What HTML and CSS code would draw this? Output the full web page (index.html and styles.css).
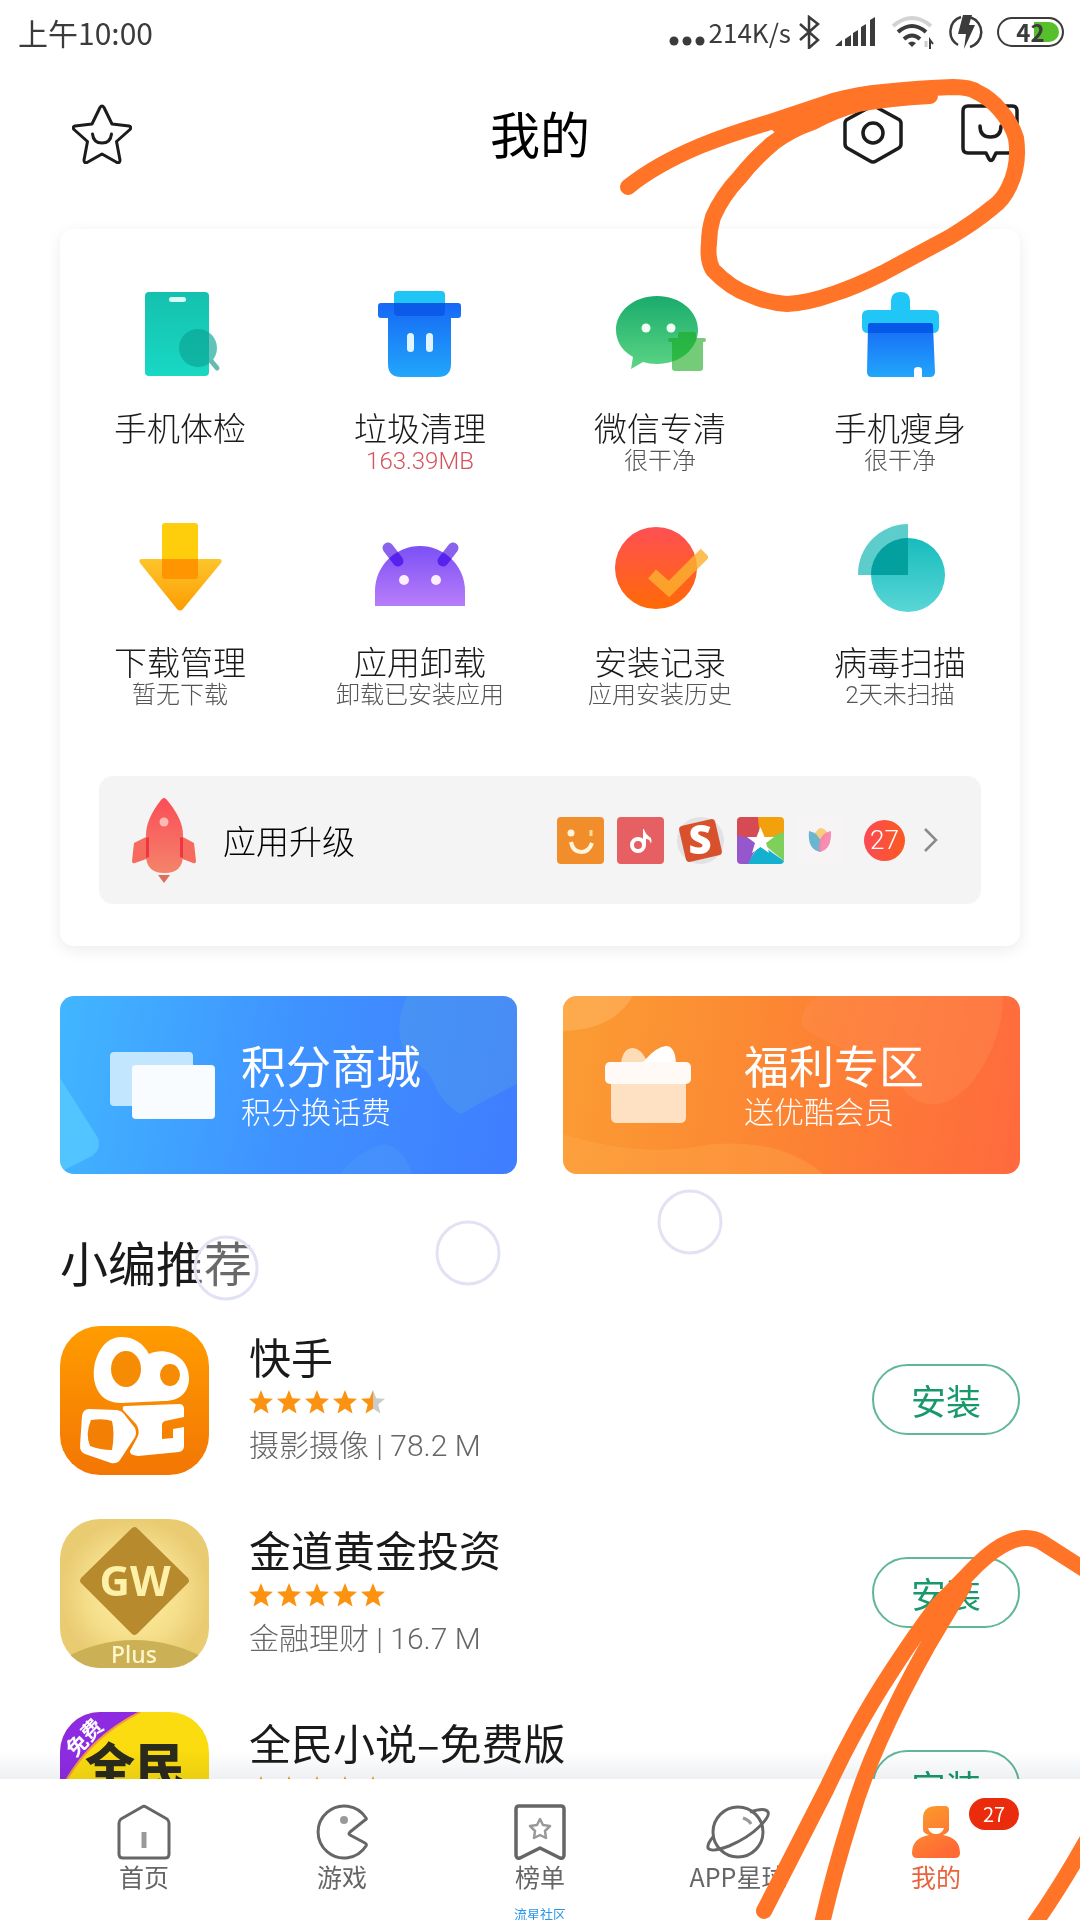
FILE: index.html
```html
<!DOCTYPE html>
<html lang="zh-CN">
<head>
  <meta charset="UTF-8">
  <meta name="viewport" content="width=device-width, initial-scale=1">
  <title>我的</title>
  <link rel="stylesheet" href="styles.css">
</head>
<body>

<!-- shared shapes -->
<svg class="defs" width="0" height="0">
  <defs>
    <symbol id="star" viewBox="0 0 22 22">
      <path d="M11 0l3 7.600 8 .5-6.200 5.200 2.100 8.200L11 17.200 4.100 21.500l2.100-8.200L0 8.100l8-.5z"/>
    </symbol>
    <linearGradient id="g-teal" x1="0" y1="0" x2="0" y2="1"><stop offset="0" stop-color="#14c1ae"/><stop offset="1" stop-color="#18d8c4"/></linearGradient>
    <linearGradient id="g-blue" x1="0" y1="0" x2="0" y2="1"><stop offset="0" stop-color="#1668f5"/><stop offset="1" stop-color="#22a6fb"/></linearGradient>
    <linearGradient id="g-green" x1="0" y1="0" x2="0" y2="1"><stop offset="0" stop-color="#1aab6c"/><stop offset="1" stop-color="#5bd584"/></linearGradient>
    <linearGradient id="g-yellow" x1="0" y1="0" x2="0" y2="1"><stop offset="0" stop-color="#fdc52c"/><stop offset="1" stop-color="#fd9d02"/></linearGradient>
    <linearGradient id="g-purple" x1="0" y1="0" x2="0" y2="1"><stop offset="0" stop-color="#7c50f6"/><stop offset="1" stop-color="#b87df9"/></linearGradient>
    <linearGradient id="g-red" x1="0" y1="0" x2="0" y2="1"><stop offset="0" stop-color="#ff4f55"/><stop offset="1" stop-color="#ff6a06"/></linearGradient>
    <linearGradient id="g-cyan" x1="0" y1="0" x2="0" y2="1"><stop offset="0" stop-color="#17bcbd"/><stop offset="1" stop-color="#5ad6d6"/></linearGradient>
    <linearGradient id="g-rocket" x1="0" y1="0" x2="0" y2="1"><stop offset="0" stop-color="#fb4d58"/><stop offset="1" stop-color="#f4846a"/></linearGradient>
    <linearGradient id="g-me" x1="0" y1="0" x2="0.500" y2="1"><stop offset="0" stop-color="#fb9f2a"/><stop offset="1" stop-color="#ff6a35"/></linearGradient>
    <linearGradient id="g-ks" x1="0" y1="0" x2="0" y2="1"><stop offset="0" stop-color="#ff9c00"/><stop offset="1" stop-color="#f37603"/></linearGradient>
    <radialGradient id="g-gold"><stop offset="0" stop-color="#fdf0a4"/><stop offset="0.600" stop-color="#f6df8c"/><stop offset="1" stop-color="#e9cb72"/></radialGradient>
    <linearGradient id="g-half"><stop offset="0.500" stop-color="#fb9210"/><stop offset="0.500" stop-color="#ccc"/></linearGradient>
    <clipPath id="dome"><path d="M3 86V71a45 45 0 0 1 90 0v15z"/></clipPath>
  </defs>
</svg>

<div class="app">

  <div class="status">
    <span class="clock">上午10:00</span>
    <div class="status-right">
      <svg width="36" height="10" fill="#3b3b3b"><circle cx="5" cy="5" r="4.500"/><circle cx="18" cy="5" r="4.500"/><circle cx="31" cy="5" r="4.500"/></svg>
      <span class="speed">214K/s</span>
      <svg width="22" height="34" viewBox="0 0 22 34" fill="none" stroke="#3b3b3b" stroke-width="2.500"><path d="M1 9l18 16-9 8V2l9 7L1 25"/></svg>
      <svg class="signal" width="42" height="30" viewBox="0 0 42 30" fill="#3b3b3b"><path d="M0 29l7-6v6zM10 22l6-4v11h-6zM18 16l5-3v16h-5zM26 10l5-3v22h-5zM35 3l5-3v29h-5z"/></svg>
      <svg width="44" height="34" viewBox="0 0 44 34" fill="none" stroke="#3b3b3b" stroke-width="4"><path d="M2 11Q21-5 40 11" stroke="#d3d3d3"/><path d="M7 17q14-12 28 0M13 24q8-7 16 0"/><path d="M21 32l-4-4q4-3 8 0z" fill="#3b3b3b" stroke="none"/><path d="M39 34V25l3 4" stroke-width="2"/><path d="M35 26v6" stroke="#ccc" stroke-width="3"/></svg>
      <svg width="34" height="34" viewBox="0 0 34 34"><path d="M12 2A15.500 15.500 0 0 0 9 30M22 2.500A15.500 15.500 0 0 1 21 32" fill="none" stroke="#3b3b3b" stroke-width="2.500"/><path d="M14 0h9l-3 10h6L15 34l2-15h-8z" fill="#3b3b3b"/></svg>
      <span class="battery">42</span>
    </div>
  </div>

  <header class="header">
    <button class="icon-btn" aria-label="收藏">
      <svg width="60" height="60" viewBox="0 0 60 60" fill="none" stroke="#1c1c1c" stroke-width="3" stroke-linejoin="round" stroke-linecap="round"><path d="M28 3.500q2-3 4 0l8 16.500 17 2q3 1 1 3.500L44.500 37.500 48 56q0 3.500-3 2.500L30 50l-15 8.500q-3 1-3-2.500l3.500-18.500L2 25.500q-2-2.500 1-3.500l17-2z"/><path d="M20.500 30q1 9 9.500 9t9.500-9"/></svg>
    </button>
    <h1>我的</h1>
    <div class="header-right">
      <button class="icon-btn" aria-label="设置">
        <svg width="60" height="60" viewBox="0 0 60 60" fill="none" stroke="#1c1c1c" stroke-width="3.500" stroke-linejoin="round"><path d="M27 3q3-1.500 6 0l22 12q3 1.500 3 4v21q0 3-3 4.500L33 57q-3 2-6 0L5 44.500Q2 43 2 40V19q0-2.500 3-4z"/><circle cx="30" cy="29" r="10"/></svg>
      </button>
      <button class="icon-btn" aria-label="消息">
        <svg width="60" height="60" viewBox="0 0 60 60" fill="none" stroke="#1c1c1c" stroke-width="3.500" stroke-linejoin="round" stroke-linecap="round"><path d="M8 2h44q5 0 5 5v37q0 5-5 5H36l-3 6q-2 3-4 0l-3-6H8q-5 0-5-5V7q0-5 5-5z"/><path d="M20 22q0 11 10.500 11t10.500-11"/></svg>
      </button>
    </div>
  </header>

  <main class="main">
    <section class="card">
      <div class="tools">
        <a class="tool" href="#">
          <svg width="96" height="96"><rect x="13" y="6" width="64" height="84" rx="4" fill="url(#g-teal)"/><rect x="37" y="11" width="17" height="5" rx="2.500" fill="#d8fbf5"/><circle cx="66" cy="62" r="19" fill="#0aa394" fill-opacity=".65"/><path d="M80 76l5 6" stroke="#66bcb0" stroke-width="5" stroke-linecap="round"/></svg>
          <span class="tool-name">手机体检</span>
        </a>
        <a class="tool" href="#">
          <svg width="96" height="96"><path d="M9 17h77q3 0 3 3v9q0 3-3 3h-7v46q0 13-13 13H29q-13 0-13-13V32H9q-3 0-3-3v-9q0-3 3-3z" fill="url(#g-blue)"/><path d="M22 17V9q0-4 4-4h43q4 0 4 4v8z" fill="#1ec5f5"/><path d="M22 17h51v9q0 4-4 4H26q-4 0-4-4z" fill="#0b5ae8"/><rect x="35" y="47" width="7" height="19" rx="3.500" fill="#dff4ff"/><rect x="54" y="47" width="7" height="19" rx="3.500" fill="#dff4ff"/></svg>
          <span class="tool-name">垃圾清理</span>
          <span class="tool-sub red">163.39MB</span>
        </a>
        <a class="tool" href="#">
          <svg width="96" height="96"><path d="M45 10c23 0 41 15 41 34S68 78 45 78q-8 0-14-2l-12 7 2-12C10 65 4 55 4 44c0-19 18-34 41-34z" fill="url(#g-green)"/><circle cx="34" cy="42" r="4.500" fill="#effff5"/><circle cx="59" cy="42" r="4.500" fill="#effff5"/><path d="M66 52v-4q0-2 2-2h14q2 0 2 2v4h8q2 0 2 2t-2 2h-1v26q0 3-3 3H63q-3 0-3-3V56h-2q-2 0-2-2t2-2z" fill="#18aa20" fill-opacity=".6"/></svg>
          <span class="tool-name">微信专清</span>
          <span class="tool-sub">很干净</span>
        </a>
        <a class="tool" href="#">
          <svg width="96" height="96"><path d="M39 24v-9q0-9 9.500-9t9.500 9v9h23q6 0 6 6v11q0 6-6 6H16q-6 0-6-6V30q0-6 6-6z" fill="#1fc6f6"/><path d="M19 37h59q3 0 3 3l2 46q0 5-5 5h-8v-7q0-3-4-3t-4 3v7H20q-5 0-5-5l1-46q0-3 3-3z" fill="url(#g-blue)"/><path d="M19 37h59q3 0 3 3v7H16v-7q0-3 3-3z" fill="#0659e8"/></svg>
          <span class="tool-name">手机瘦身</span>
          <span class="tool-sub">很干净</span>
        </a>
        <a class="tool" href="#">
          <svg width="96" height="96"><rect x="30" y="3" width="36" height="56" rx="3" fill="#fecd0c"/><path d="M10 39h77q4 0 2 4L51 89q-3 3-6 0L8 43q-2-4 2-4z" fill="url(#g-yellow)"/><path d="M30 39h36v17q0 3-3 3H33q-3 0-3-3z" fill="#ff9500"/></svg>
          <span class="tool-name">下载管理</span>
          <span class="tool-sub">暂无下载</span>
        </a>
        <a class="tool" href="#">
          <svg width="96" height="96"><path d="M16 28l10 13M81 28L71 41" stroke="#8a62ec" stroke-width="11" stroke-linecap="round"/><path d="M3 86V71a45 45 0 0 1 90 0v15z" fill="url(#g-purple)"/><path clip-path="url(#dome)" d="M16 28l10 13M81 28L71 41" stroke="#5722ee" stroke-width="11" stroke-linecap="round"/><circle cx="32" cy="60" r="5" fill="#fbeeff"/><circle cx="64" cy="60" r="5" fill="#fbeeff"/></svg>
          <span class="tool-name">应用卸载</span>
          <span class="tool-sub">卸载已安装应用</span>
        </a>
        <a class="tool" href="#">
          <svg width="96" height="96"><circle cx="44" cy="48" r="41" fill="url(#g-red)"/><path d="M40 54l17 15 36-36" fill="none" stroke="#fbb030" stroke-opacity=".82" stroke-width="12"/></svg>
          <span class="tool-name">安装记录</span>
          <span class="tool-sub">应用安装历史</span>
        </a>
        <a class="tool" href="#">
          <svg width="96" height="96"><circle cx="56" cy="55" r="37" fill="url(#g-cyan)"/><path d="M56 55H6A50 50 0 0 1 56 4z" fill="#0fb5b3" fill-opacity=".68"/><path d="M56 55H19A37 37 0 0 1 56 18z" fill="#049f9f"/></svg>
          <span class="tool-name">病毒扫描</span>
          <span class="tool-sub">2天未扫描</span>
        </a>
      </div>

      <a class="upgrade" href="#">
        <svg width="80" height="96"><path d="M22 45L10 51l-2 18q0 3 3 2l14-5zM59 45l11 6 2 18q0 3-3 2l-13-5z" fill="#f76b5f"/><path d="M37 8q3-4 6 0 16 19 16 35v20q0 18-18.500 18T22 63V43Q22 27 37 8z" fill="url(#g-rocket)"/><path d="M22 46l3-1v20l-3 1zM56 45l3 1v20l-3-1z" fill="#ee3540"/><circle cx="40" cy="30" r="4.500" fill="#ffb9b4"/><path d="M34 83h12l-6 8z" fill="#dd6f5c"/></svg>
        <span class="upgrade-name">应用升级</span>
        <div class="mini-apps">
          <svg width="47" height="47"><rect width="47" height="47" rx="4" fill="#f18d2a"/><circle cx="14" cy="16" r="3.500" fill="#fff5df"/><path d="M34 13v6" stroke="#ffd9a0" stroke-width="3"/><path d="M14 25q2 10 10 10t11-9" fill="none" stroke="#fff5df" stroke-width="4"/></svg>
          <svg width="47" height="47"><rect width="47" height="47" rx="4" fill="#e65f63"/><circle cx="21" cy="28" r="6" fill="none" stroke="#fff" stroke-width="4"/><path d="M26 28V12h1q1 5 7 9 1 3 0 6-1-5-5-5v6z" fill="#fff"/></svg>
          <svg width="47" height="47"><circle cx="23.500" cy="23.500" r="23.500" fill="#e2e2e4"/><rect x="5" y="5" width="37" height="37" rx="4" fill="#d9512c" transform="rotate(-13 23.500 23.500)"/><text class="sogou" x="23" y="37" text-anchor="middle">S</text></svg>
          <svg width="47" height="47"><clipPath id="sq"><rect width="47" height="47" rx="4"/></clipPath><g clip-path="url(#sq)"><path d="M0 0h22l1 24L0 19z" fill="#d64a54"/><path d="M21 0h26v17L23 24z" fill="#f2a00c"/><path d="M47 15v29L23 24z" fill="#7ed05a"/><path d="M47 44v3H10l13-20z" fill="#14b0cf"/><path d="M0 18l23 6-12 23H0z" fill="#9656cc"/></g><path d="M23.500 10l4 10H37l-8 6 3 10-8.500-6-8.500 6 3-10-8-6h9.500z" fill="#fff"/></svg>
          <svg width="47" height="47"><rect width="47" height="47" rx="4" fill="#f6f4f4"/><path d="M17 17q5-7 7-6 5 1 7 6l-7 9z" fill="#f9cd80"/><path d="M12 14q10 2 12 12v9Q10 33 12 14z" fill="#6bb6cf"/><path d="M34 14q-10 2-12 12v9q13-2 12-21z" fill="#f583a8" fill-opacity=".9"/></svg>
        </div>
        <span class="count">27</span>
        <svg class="chevron" width="16" height="26" fill="none" stroke="#8a8a8a" stroke-width="2.500"><path d="M2 2l11 11L2 24"/></svg>
      </a>
    </section>

    <section class="banners">
      <a class="banner blue" href="#">
        <svg class="banner-bg" viewBox="0 0 457 178" preserveAspectRatio="none"><path d="M347 0h110v88q-30 15-56 30-20-10-29-35-10-15-22-20-20-25-3-63z" fill="#56a0e6" fill-opacity=".4"/><path d="M0 82l38 60q4 14-10 20L0 176z" fill="#5cd0ff" fill-opacity=".65"/><path d="M280 178q20-25 45-30 20 5 27 30z" fill="#4f9df5" fill-opacity=".35"/></svg>
        <svg class="banner-icon" width="106" height="80"><rect x="0" y="7" width="83" height="54" rx="4" fill="#c3e6ff"/><rect x="22" y="20" width="83" height="54" rx="4" fill="#f8fcff"/></svg>
        <div class="banner-text">
          <span class="banner-title">积分商城</span>
          <span class="banner-sub">积分换话费</span>
        </div>
      </a>
      <a class="banner orange" href="#">
        <svg class="banner-bg" viewBox="0 0 457 178" preserveAspectRatio="none"><path d="M0 0h70Q50 34 0 35z" fill="#ffb763" fill-opacity=".55"/><path d="M255 0h185q0 45-30 85-35 40-67 12-18-28-45-38-45-15-60-30 0-19 17-29z" fill="#ff8f55" fill-opacity=".35"/><path d="M0 178v-40q80 25 150 10 70-5 110 30z" fill="#ffab4d" fill-opacity=".35"/></svg>
        <svg class="banner-icon" width="90" height="80"><path d="M17 18q2-15 12-15 8 0 15 15z" fill="#fddcb8"/><path d="M41 15Q52 2 62 1q9 0 10 17H38z" fill="#fff"/><path d="M7 38h75v34q0 6-6 6H13q-6 0-6-6z" fill="#fee0c3"/><rect x="1" y="17" width="86" height="22" rx="5" fill="#fffaf5"/></svg>
        <div class="banner-text">
          <span class="banner-title">福利专区</span>
          <span class="banner-sub">送优酷会员</span>
        </div>
      </a>
    </section>

    <h2>小编推荐</h2>

    <ul class="apps">
      <li class="app-item">
        <svg class="app-icon" viewBox="0 0 149 149"><rect width="149" height="149" rx="40" fill="url(#g-ks)"/><path d="M61 11c13 0 22 6 28 17 16-8 40 2 40 24 0 14-9 23-25 23l-43 2C20 77 30 11 61 11z" fill="#fff"/><ellipse cx="66" cy="43" rx="15" ry="18" fill="#f68c03"/><ellipse cx="110" cy="49" rx="10" ry="11" fill="#f68c03"/><path d="M22 90q1-7 7-7l28 1q5 1 7 4l11 14q2 5 0 9L60 134q-3 4-9 3l-26-9q-5-2-5-8z" fill="#fff"/><path d="M31 94q13-2 21 1 3 12 0 29-12 0-22-4-5-12 1-26z" fill="#f38005"/><path d="M65 80l54-2q5 0 5 5v8l-19 4q-3 1-3 4v14l11-1v-9l11-2v19q0 5-5 6l-41 4q-9-1-8-5l8-15q2-6-2-12L63 84q-1-4 2-4z" fill="#fff"/></svg>
        <div class="app-info">
          <h3>快手</h3>
          <div class="stars" role="img" aria-label="4.5"><svg><use href="#star"/></svg><svg><use href="#star"/></svg><svg><use href="#star"/></svg><svg><use href="#star"/></svg><svg class="half"><use href="#star"/></svg></div>
          <p>摄影摄像 | 78.2 M</p>
        </div>
        <button class="install">安装</button>
      </li>
      <li class="app-item">
        <svg class="app-icon" viewBox="0 0 149 149"><clipPath id="round"><rect width="149" height="149" rx="40"/></clipPath><g clip-path="url(#round)"><rect width="149" height="149" fill="url(#g-gold)"/><path d="M0 141q74-40 149 0v8H0z" fill="#ccb056"/></g><path d="M72 9q3-2 5 0l51 50q2 3 0 5l-51 51q-3 2-5 0L21 64q-2-2 0-5z" fill="#b88a2e"/><text class="gw" x="75" y="77" text-anchor="middle">GW</text><text class="plus" x="74" y="144" text-anchor="middle">Plus</text></svg>
        <div class="app-info">
          <h3>金道黄金投资</h3>
          <div class="stars" role="img" aria-label="5"><svg><use href="#star"/></svg><svg><use href="#star"/></svg><svg><use href="#star"/></svg><svg><use href="#star"/></svg><svg><use href="#star"/></svg></div>
          <p>金融理财 | 16.7 M</p>
        </div>
        <button class="install">安装</button>
      </li>
      <li class="app-item">
        <svg class="app-icon" viewBox="0 0 149 149"><g clip-path="url(#round)"><rect width="149" height="149" fill="#fbdc10"/><path d="M0 0h80Q30 25 6 68H0z" fill="#8e2be2"/><path d="M80 0Q30 25 4 72" fill="none" stroke="#f59a3c" stroke-width="2"/></g><text class="free" x="25" y="33" text-anchor="middle" transform="rotate(-46 25 26)">免费</text><text class="quanmin" x="75" y="73" text-anchor="middle">全民</text></svg>
        <div class="app-info">
          <h3>全民小说–免费版</h3>
          <div class="stars" role="img" aria-label="5"><svg><use href="#star"/></svg><svg><use href="#star"/></svg><svg><use href="#star"/></svg><svg><use href="#star"/></svg><svg><use href="#star"/></svg></div>
        </div>
        <button class="install">安装</button>
      </li>
    </ul>
  </main>

  <nav class="tabs">
    <a class="tab" href="#">
      <svg width="56" height="56" viewBox="0 0 56 56" fill="none" stroke="#666" stroke-width="3" stroke-linejoin="round"><path d="M26 3q2-1.500 4 0l21 12q2 2 2 4v31q0 4-4 4H7q-4 0-4-4V19q0-2 2-4z"/><path d="M28 28v16" stroke="#999" stroke-width="5"/></svg>
      <span>首页</span>
    </a>
    <a class="tab" href="#">
      <svg width="56" height="56" viewBox="0 0 56 56" fill="none" stroke="#666" stroke-width="3" stroke-linejoin="round"><path d="M52 14A26 26 0 1 0 52 42q1-2-1-3L36 31q-2-1 0-3l15-12q2-1 1-2z"/><circle cx="30" cy="16" r="4" fill="#999" stroke="none"/></svg>
      <span>游戏</span>
    </a>
    <a class="tab" href="#">
      <svg width="56" height="56" viewBox="0 0 56 56" fill="none" stroke="#666" stroke-width="3.500" stroke-linejoin="round"><path d="M7 2h42q3 0 3 3v46q0 4-4 3L28 44 8 54q-4 1-4-3V5q0-3 3-3z"/><path d="M28 15l3 6 7 1-5 5 1 7-6-3-6 3 1-7-5-5 7-1z" stroke="#999" stroke-width="2.500"/></svg>
      <span>榜单</span>
    </a>
    <a class="tab" href="#">
      <svg width="66" height="56" viewBox="0 0 66 56" fill="none" stroke="#666" stroke-width="3"><circle cx="33" cy="28" r="25"/><path d="M45 8q15-5 18 0 2 4-8 14-12 12-31 20Q6 49 3 44q-1-4 5-11"/><path d="M38 14q6 2 8 6" stroke="#999"/></svg>
      <span>APP星球</span>
    </a>
    <a class="tab active" href="#">
      <svg width="56" height="56" viewBox="0 0 56 56"><path d="M15 26V14Q15 2 29 2h8q4 0 4 4v20q-1 3-6 5 17 3 17 18 0 5-5 5H9q-5 0-5-5 0-15 17-18-6-2-6-5z" fill="url(#g-me)"/><path d="M20 24h16q-2 6-8 6t-8-6z" fill="#fff"/></svg>
      <span>我的</span>
      <span class="tab-badge">27</span>
    </a>
    <span class="watermark">流星社区</span>
  </nav>

  <!-- touch rings and brush marks over the page -->
  <svg class="marks" viewBox="0 0 1080 1920">
    <g fill="#fff" fill-opacity=".35" stroke="#e2e2f5" stroke-width="3">
      <circle cx="226" cy="1268" r="31"/><circle cx="468" cy="1253" r="31"/><circle cx="690" cy="1222" r="31"/>
    </g>
    <g fill="none" stroke="#ff7426" stroke-width="16" stroke-linecap="round" stroke-linejoin="round">
      <path d="M628 187Q655 165 700 146Q730 134 767 123L833 101Q860 94 883 92Q920 88 953 87Q970 87 977 92Q990 98 1000 110Q1012 124 1016 138Q1020 165 1009 187Q1003 200 993 207Q975 222 950 237L883 273Q855 287 833 294Q808 303 787 304Q768 303 750 295Q730 288 713 270Q707 260 709 243Q709 230 713 217Q722 196 740 177Q755 158 773 143Q790 130 813 122Q835 110 858 104Q890 98 930 96"/>
      <path d="M780 124L850 101" stroke-width="20"/>
      <path d="M764 1911L827 1788Q840 1760 853 1736Q870 1704 893 1669Q915 1635 937 1606L977 1565Q995 1548 1007 1543Q1027 1533 1043 1543L1090 1573"/>
      <path d="M821 1928Q833 1875 850 1821Q862 1780 880 1740Q900 1695 927 1647Q945 1617 964 1585"/>
      <path d="M928 1634L958 1592" stroke-width="20"/>
      <path d="M1033 1926Q1060 1888 1088 1838"/>
    </g>
  </svg>
</div>

</body>
</html>
```
FILE: styles.css
```css
* {
  box-sizing: border-box;
}

body {
  margin: 0;
  background: #fff;
  color: #1a1a1a;
  font-family: "Noto Sans CJK SC", "Noto Sans", sans-serif;
}

h1, h2, h3, p, ul {
  margin: 0;
  padding: 0;
  font-weight: 400;
}

a {
  color: inherit;
  text-decoration: none;
}

svg {
  display: block;
  flex-shrink: 0;
}

.defs {
  position: absolute;
}

.app {
  position: relative;
  display: flex;
  flex-direction: column;
  height: 100vh;
  overflow: hidden;
}

/* status bar */
.status {
  display: flex;
  justify-content: space-between;
  align-items: center;
  height: 66px;
  padding: 0 16px 2px 18px;
  color: #3b3b3b;
}

.clock {
  font-size: 30px;
  line-height: 40px;
}

.status-right {
  display: flex;
  align-items: center;
  gap: 14px;
}

.status-right svg:first-child {
  align-self: flex-end;
  margin: 0 -10px 4px 0;
}

.speed {
  margin-right: -6px;
  font-size: 26px;
  line-height: 36px;
}

.battery {
  width: 67px;
  height: 30px;
  border: 2px solid #3b3b3b;
  border-radius: 15px;
  box-shadow: inset 0 0 0 3px #fff;
  background: linear-gradient(90deg, #fff 55%, #55c02c 55%);
  font-size: 24px;
  font-weight: 700;
  line-height: 25px;
  text-align: center;
}

/* header */
.header {
  display: grid;
  grid-template-columns: 1fr auto 1fr;
  align-items: center;
  height: 136px;
  padding: 0 60px;
}

h1 {
  padding-bottom: 4px;
  color: #000;
  font-size: 50px;
  line-height: 72px;
}

.icon-btn {
  width: 60px;
  padding: 0;
  border: 0;
  background: none;
}

.header > .icon-btn {
  margin-left: 12px;
}

.header-right {
  display: flex;
  justify-content: flex-end;
  gap: 57px;
}

.main {
  flex: 1;
  min-height: 0;
  overflow: hidden;
  padding: 27px 60px 0;
}

/* tools card */
.card {
  padding: 57px 0 42px;
  border-radius: 14px;
  box-shadow: 0 4px 16px rgba(0, 0, 0, 0.08);
}

.tools {
  display: grid;
  grid-template-columns: repeat(4, 1fr);
  row-gap: 47px;
}

.tool {
  display: flex;
  flex-direction: column;
  align-items: center;
}

.tool-name {
  margin-top: 25px;
  font-size: 33px;
  font-weight: 300;
  line-height: 40px;
}

.tool-sub {
  margin-top: 2px;
  color: #555;
  font-family: Roboto, "Noto Sans CJK SC", sans-serif;
  font-size: 24px;
  font-weight: 300;
  line-height: 24px;
}

.red {
  color: #d4545c;
}

.upgrade {
  display: flex;
  align-items: center;
  height: 128px;
  margin: 69px 39px 0;
  padding: 0 42px 0 25px;
  border-radius: 14px;
  background: #f4f4f4;
}

.upgrade-name {
  flex: 1;
  margin-left: 19px;
  color: #000;
  font-size: 33px;
  font-weight: 300;
}

.mini-apps {
  display: flex;
  gap: 13px;
}

.sogou {
  fill: #fff;
  font: 900 40px "Noto Sans", sans-serif;
}

.count {
  width: 41px;
  height: 41px;
  margin: 0 18px 0 20px;
  border-radius: 50%;
  background: linear-gradient(90deg, #fb4a55, #fb5a20);
  color: #fff;
  font-family: Roboto, sans-serif;
  font-size: 26px;
  font-weight: 300;
  line-height: 41px;
  text-align: center;
}

/* banners */
.banners {
  display: grid;
  grid-template-columns: 1fr 1fr;
  gap: 46px;
  margin-top: 50px;
}

.banner {
  position: relative;
  display: flex;
  align-items: center;
  height: 178px;
  border-radius: 14px;
  overflow: hidden;
  color: #fff;
}

.blue {
  padding-left: 50px;
  background: linear-gradient(100deg, #41b6ff, #3f92ff 50%, #3f7dff);
}

.orange {
  padding-left: 41px;
  background: linear-gradient(100deg, #fb9d33, #fc8433 50%, #ff693e);
}

.banner-bg {
  position: absolute;
  inset: 0;
  width: 100%;
  height: 100%;
}

.banner-icon,
.banner-text {
  position: relative;
}

.banner-text {
  display: flex;
  flex-direction: column;
  margin-left: 25px;
}

.orange .banner-text {
  margin-left: 50px;
}

.banner-title {
  font-size: 45px;
  line-height: 50px;
}

.banner-sub {
  font-size: 30px;
  font-weight: 300;
  line-height: 40px;
}

/* recommended apps */
h2 {
  margin-top: 58px;
  font-size: 48px;
  line-height: 58px;
}

.apps {
  display: flex;
  flex-direction: column;
  gap: 44px;
  margin-top: 36px;
  list-style: none;
}

.app-item {
  display: flex;
  align-items: flex-start;
  gap: 40px;
}

.app-icon {
  width: 149px;
  height: 149px;
}

.gw {
  fill: #fdf0a8;
  font: 700 42px "Noto Sans", sans-serif;
}

.plus {
  fill: #fdf6c8;
  font: 500 23px "Noto Sans", sans-serif;
}

.free {
  fill: #fff;
  font-size: 21px;
  font-weight: 700;
}

.quanmin {
  fill: #2b2b1c;
  font-size: 50px;
  font-weight: 900;
}

.app-info {
  flex: 1;
  padding-top: 5px;
}

h3 {
  font-size: 42px;
  line-height: 50px;
}

.stars {
  display: flex;
  gap: 4px;
  margin: 9px 0 14px;
  fill: #fb9210;
}

.stars svg {
  width: 24px;
  height: 24px;
}

.half {
  fill: url(#g-half);
}

p {
  color: #666;
  font-family: Roboto, "Noto Sans CJK SC", sans-serif;
  font-size: 30px;
  font-weight: 300;
  line-height: 36px;
}

.install {
  width: 148px;
  height: 71px;
  margin-top: 38px;
  padding: 0;
  border: 2px solid #5fb795;
  border-radius: 36px;
  background: none;
  color: #17996b;
  font-family: inherit;
  font-size: 35px;
}

/* bottom tabs */
.tabs {
  position: relative;
  display: grid;
  grid-template-columns: repeat(5, 1fr);
  height: 141px;
  padding: 25px 45px 0;
  background: #fff;
}

.tabs::before {
  content: "";
  position: absolute;
  left: 0;
  right: 0;
  bottom: 100%;
  height: 28px;
  background: linear-gradient(#fff, #eef0f3);
  mix-blend-mode: multiply;
}

.tab {
  position: relative;
  display: flex;
  flex-direction: column;
  align-items: center;
  color: #666;
  font-size: 25px;
  line-height: 32px;
}

.active {
  color: #e8643c;
}

.tab-badge {
  position: absolute;
  top: -6px;
  left: calc(50% + 33px);
  width: 50px;
  border-radius: 16px;
  background: #ea2b0c;
  color: #fff;
  font-size: 20px;
  text-align: center;
}

.watermark {
  position: absolute;
  left: 0;
  right: 0;
  bottom: -3px;
  color: #2b95e9;
  font-size: 13px;
  line-height: 18px;
  text-align: center;
}

.marks {
  position: absolute;
  top: 0;
  left: 0;
  width: 100%;
  pointer-events: none;
}
```
